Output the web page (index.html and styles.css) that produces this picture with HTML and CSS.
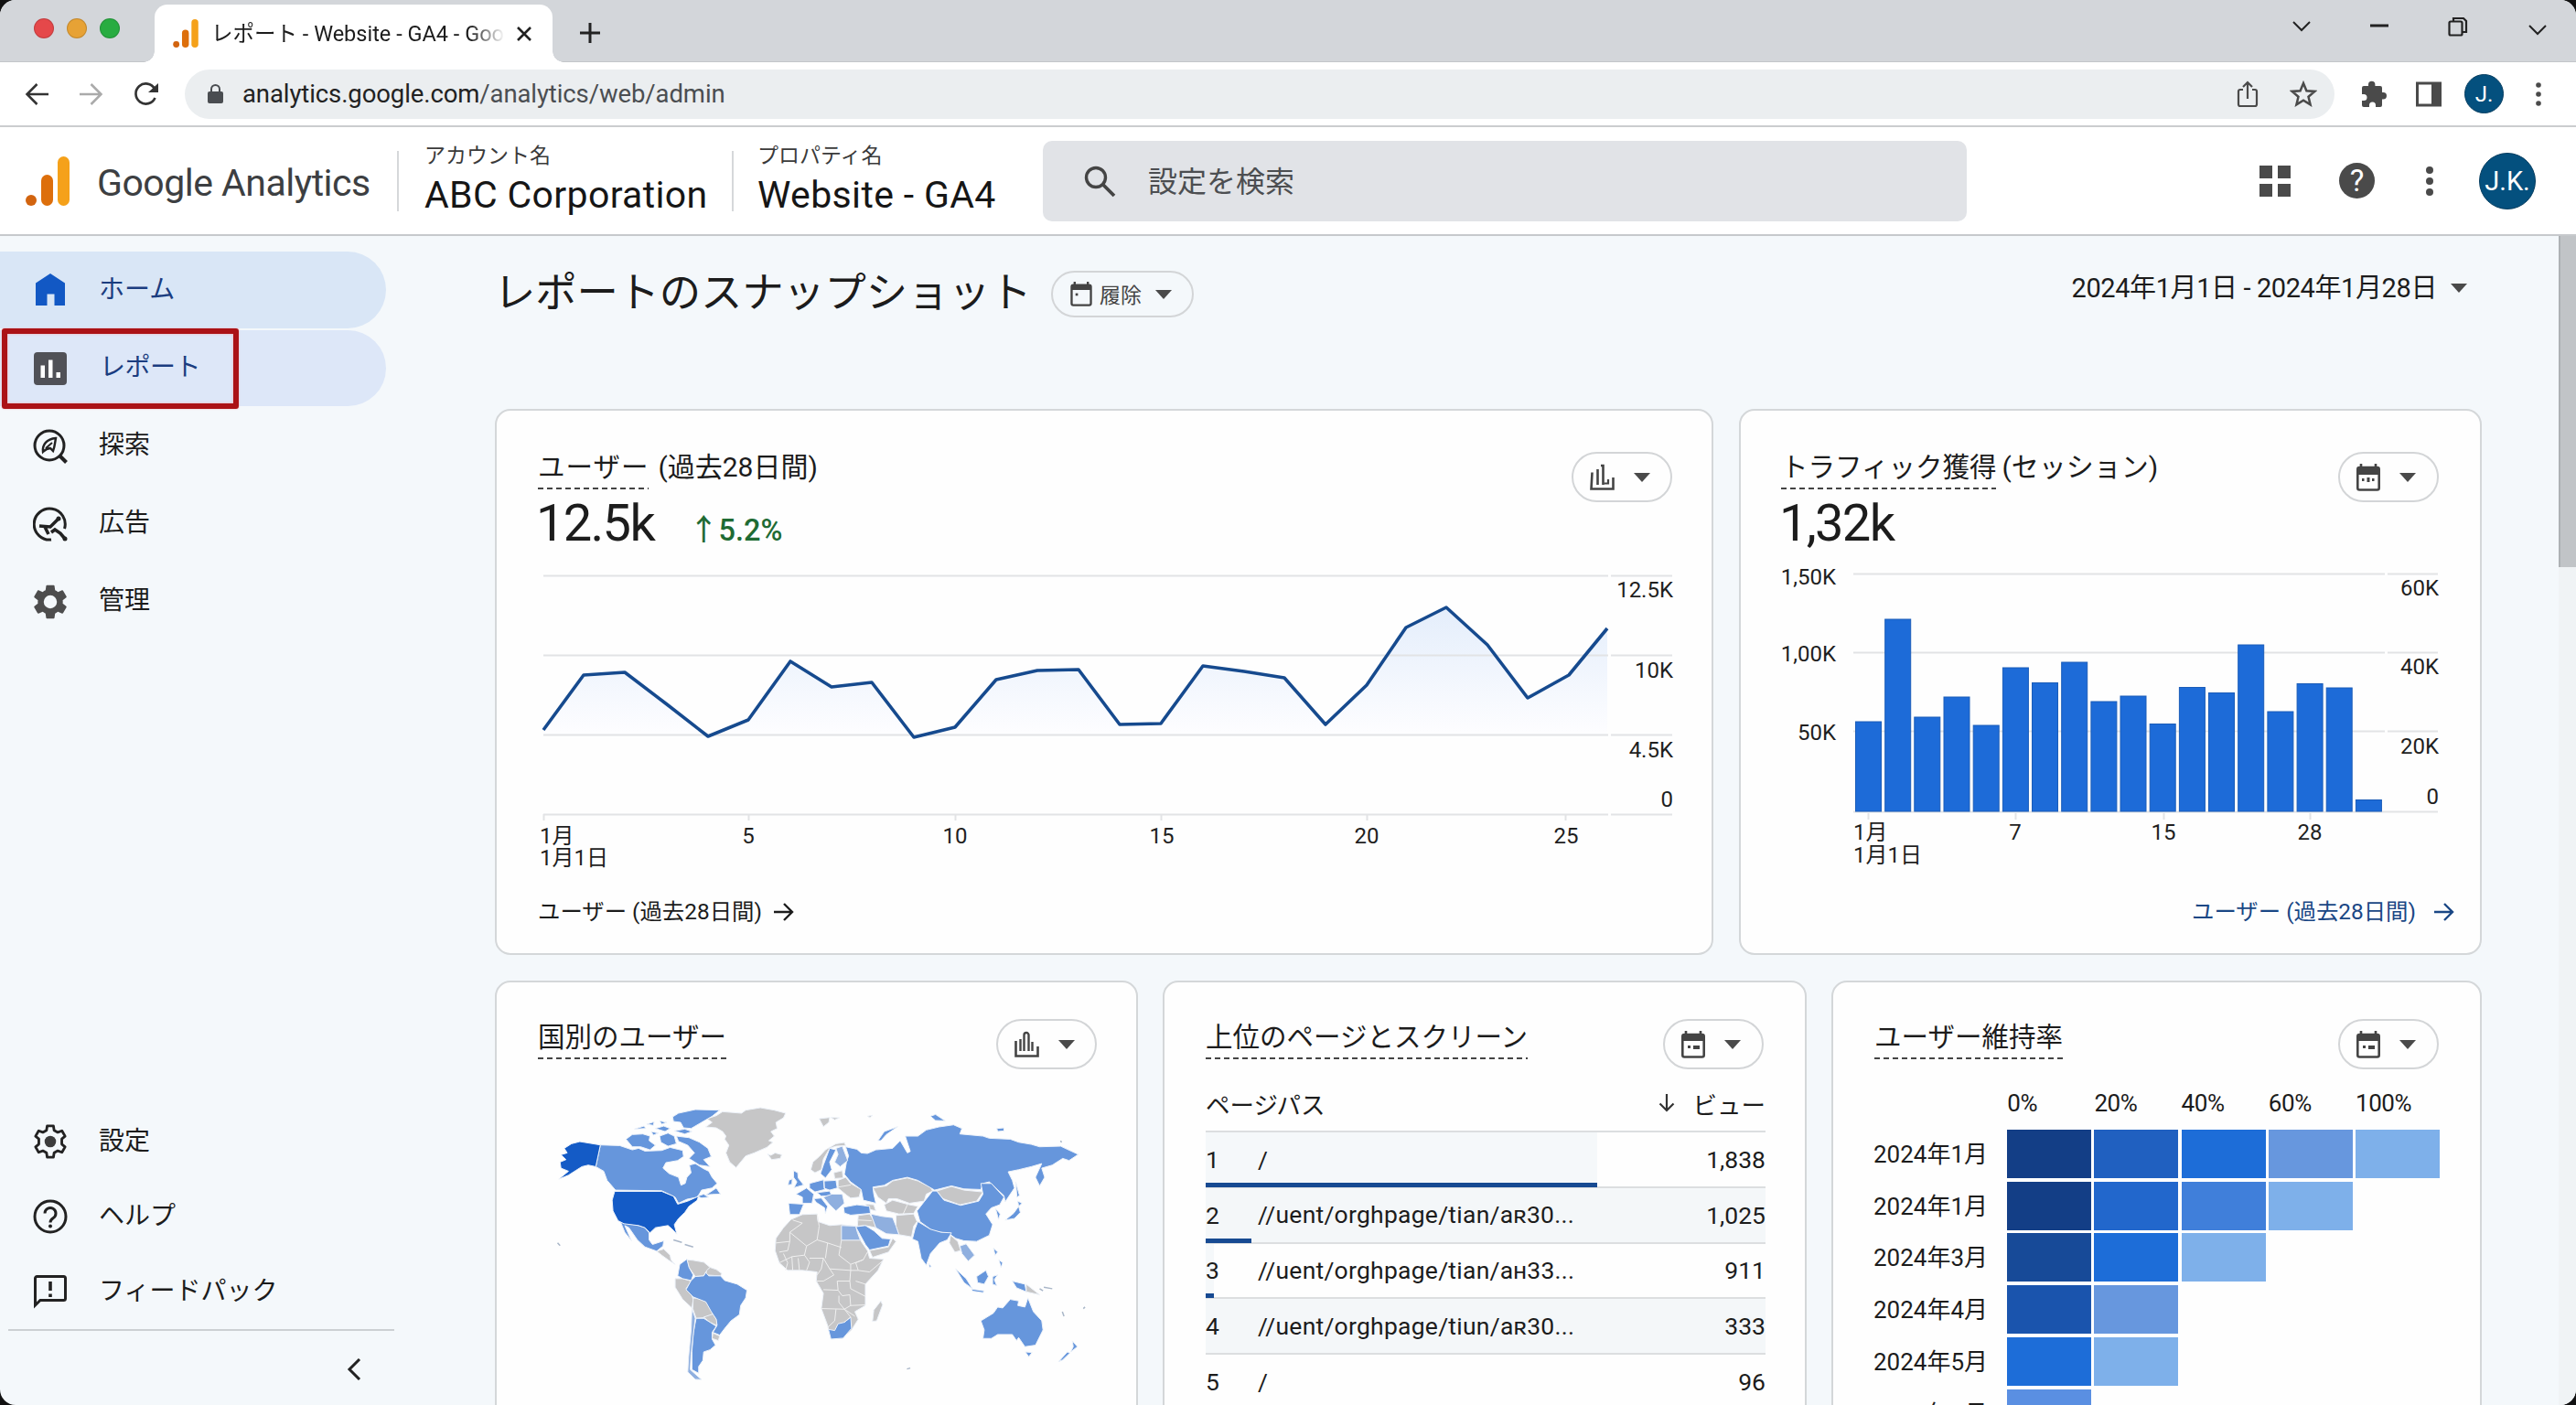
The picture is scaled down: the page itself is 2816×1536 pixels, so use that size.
FILE: index.html
```html
<!DOCTYPE html>
<html lang="ja">
<head>
    <meta charset="UTF-8">
    <meta name="viewport" content="width=device-width, initial-scale=1.0">
    <title>レポート - Website - GA4 - Google Analytics</title>
    <link rel="stylesheet" href="styles.css">
</head>
<body>
<svg class="defs" width="0" height="0">
    <symbol id="ic-ga" viewBox="0 0 48 54">
        <circle cx="6" cy="48" r="6" fill="#d2640f"/>
        <rect x="17" y="20" width="13" height="34" rx="6.5" fill="#dd6f0c"/>
        <rect x="35" y="0" width="13" height="54" rx="6.5" fill="#f5a11a"/>
    </symbol>
    <symbol id="ic-down" viewBox="0 0 18 10"><path d="M0 0h18l-9 10z" fill="#4a4a4a"/></symbol>
    <symbol id="ic-cal" viewBox="0 0 26 30">
        <path d="M5 0v6M21 0v6" stroke="#444" stroke-width="2.600"/>
        <rect x="1.300" y="4" width="23.400" height="24.500" rx="2" fill="none" stroke="#444" stroke-width="2.600"/>
        <path d="M1 4h24v7H1z" fill="#444"/>
        <path d="M7 16h3v3H7zM13 16h7v4h-7z" fill="#444"/>
    </symbol>
    <symbol id="ic-cal-empty" viewBox="0 0 26 30">
        <path d="M5 0v6M21 0v6" stroke="#444" stroke-width="2.600"/>
        <rect x="1.300" y="4" width="23.400" height="24.500" rx="2" fill="none" stroke="#444" stroke-width="2.600"/>
        <path d="M1 4h24v6H1z" fill="#444"/>
        <path d="M6 14h3v3H6z" fill="#444"/>
    </symbol>
    <symbol id="ic-cal-days" viewBox="0 0 26 30">
        <path d="M5 0v6M21 0v6" stroke="#444" stroke-width="2.600"/>
        <rect x="1.300" y="4" width="23.400" height="24.500" rx="2" fill="none" stroke="#444" stroke-width="2.600"/>
        <path d="M1 4h24v8H1z" fill="#444"/>
        <path d="M6 16h2.500v3H6zM11.500 15h3v5h-3zM17 16h2.500v3H17z" fill="#444"/>
    </symbol>
    <symbol id="ic-chart" viewBox="0 0 27 29">
        <path d="M2.500 9.500L1.500 27.500h24V15M8.500 6v17M12 2h2.500v21" fill="none" stroke="#444" stroke-width="2.600"/>
        <path d="M15.500 21.500h4.500v-4.500" fill="none" stroke="#444" stroke-width="2.200"/>
    </symbol>
    <symbol id="ic-chart-round" viewBox="0 0 27 29">
        <path d="M1.500 11v16.500h24V17" fill="none" stroke="#444" stroke-width="2.600"/>
        <path d="M6.500 9v13M10.500 22V4.500a2.500 2.500 0 0 1 5 0V22M19.500 12v10" fill="none" stroke="#444" stroke-width="2.400"/>
    </symbol>
    <symbol id="ic-arrow" viewBox="0 0 24 22"><path d="M1 11h20M12 2l9 9-9 9" fill="none" stroke="currentColor" stroke-width="2.400"/></symbol>
</svg>

<div class="window">
    <!-- タブバー -->
    <div class="tabstrip">
        <div class="lights"><i class="red"></i><i class="yellow"></i><i class="green"></i></div>
        <div class="tab">
            <svg class="favicon" width="28" height="31"><use href="#ic-ga"/></svg>
            <span class="tab-title">レポート - Website - GA4 - Goo</span>
            <svg class="tab-close" width="18" height="18" viewBox="0 0 18 18"><path d="M2 2l14 14M16 2L2 16" stroke="#222" stroke-width="2.600"/></svg>
        </div>
        <svg class="tab-new" width="24" height="24" viewBox="0 0 24 24"><path d="M12 1v22M1 12h22" stroke="#222" stroke-width="3"/></svg>
        <div class="win-controls">
            <svg width="20" height="14" viewBox="0 0 20 14"><path d="M1 2l9 9 9-9" fill="none" stroke="#222" stroke-width="2"/></svg>
            <svg width="20" height="14" viewBox="0 0 20 14"><path d="M0 6h20" stroke="#222" stroke-width="3"/></svg>
            <svg width="22" height="22" viewBox="0 0 22 22"><path d="M6 5V2h11l3 3v12h-4" fill="none" stroke="#222" stroke-width="2.200"/><rect x="1.500" y="5.500" width="14" height="15" rx="1.500" fill="none" stroke="#222" stroke-width="2.200"/></svg>
            <svg class="low" width="20" height="14" viewBox="0 0 20 14"><path d="M1 2l9 9 9-9" fill="none" stroke="#222" stroke-width="2"/></svg>
        </div>
    </div>

    <!-- アドレスバー -->
    <div class="toolbar">
        <svg class="nav-back" width="26" height="26" viewBox="0 0 26 26"><path d="M26 13H3M13.500 2L2.500 13l11 11" fill="none" stroke="#333" stroke-width="2.500"/></svg>
        <svg class="nav-fwd" width="26" height="26" viewBox="0 0 26 26"><path d="M0 13h23M12.500 2l11 11-11 11" fill="none" stroke="#aaa" stroke-width="2.500"/></svg>
        <svg class="nav-reload" width="28" height="28" viewBox="0 0 28 28"><path d="M23.500 18A11 11 0 1 1 23 8" fill="none" stroke="#333" stroke-width="2.700"/><path d="M27 2v10H16z" fill="#333"/></svg>
        <div class="omnibox">
            <svg class="lock" width="17" height="22" viewBox="0 0 17 22"><rect y="8" width="17" height="13" rx="2" fill="#4a4d51"/><path d="M4 9V5.500a4.500 4.500 0 0 1 9 0V9" fill="none" stroke="#4a4d51" stroke-width="2"/></svg>
            <span class="url">analytics.google.com<span class="path">/analytics/web/admin</span></span>
            <svg class="share" width="24" height="30" viewBox="0 0 24 30"><path d="M7 10H4a2 2 0 0 0-2 2v14a2 2 0 0 0 2 2h16a2 2 0 0 0 2-2V12a2 2 0 0 0-2-2h-3M12 20V3M7 7l5-5 5 5" fill="none" stroke="#4a4a4a" stroke-width="2.200"/></svg>
            <svg class="star" width="30" height="29" viewBox="0 0 30 29"><path d="M15 3l3.400 8.200 8.900.7-6.800 5.800 2.100 8.700-7.600-4.700-7.600 4.700 2.100-8.700-6.800-5.800 8.900-.7z" fill="none" stroke="#4a4a4a" stroke-width="2.500"/></svg>
        </div>
        <svg class="puzzle" width="29" height="29" viewBox="0 0 29 29"><path d="M2 8a2 2 0 0 1 2-2h5V4.500a3.700 3.700 0 0 1 7.400 0V6H22a2 2 0 0 1 2 2v5h1.300a3.700 3.700 0 0 1 0 7.400H24V27a2 2 0 0 1-2 2h-5v-2a3.500 3.500 0 0 0-7 0v2H4a2 2 0 0 1-2-2v-5h2a3.500 3.500 0 0 0 0-7H2z" fill="#4a4a4a"/></svg>
        <svg class="panel" width="28" height="28" viewBox="0 0 28 28"><rect x="1.500" y="2" width="25" height="24" fill="none" stroke="#4a4a4a" stroke-width="3"/><path d="M17 2h10v24H17z" fill="#4a4a4a"/></svg>
        <div class="avatar small">J.</div>
        <svg class="kebab-sm" width="6" height="26" viewBox="0 0 6 26"><g fill="#4a4a4a"><circle cx="3" cy="3" r="2.800"/><circle cx="3" cy="13" r="2.800"/><circle cx="3" cy="23" r="2.800"/></g></svg>
    </div>

    <!-- ヘッダー -->
    <header class="header">
        <svg class="logo" width="48" height="54"><use href="#ic-ga"/></svg>
        <div class="brand"><b>Google</b> Analytics</div>
        <div class="account first">
            <small>アカウント名</small>
            <span>ABC Corporation</span>
        </div>
        <div class="account second">
            <small>プロパティ名</small>
            <span>Website - GA4</span>
        </div>
        <div class="search">
            <svg width="36" height="36" viewBox="0 0 36 36"><circle cx="14" cy="14" r="10.500" fill="none" stroke="#444" stroke-width="3.400"/><path d="M21.500 21.500L34 34" stroke="#444" stroke-width="3.800"/></svg>
            <span>設定を検索</span>
        </div>
        <div class="header-icons">
            <svg width="34" height="34" viewBox="0 0 34 34"><path d="M0 0h14v14H0zM20 0h14v14H20zM0 20h14v14H0zM20 20h14v14H20z" fill="#4a4a4a"/></svg>
            <div class="help">?</div>
            <svg class="kebab" width="8" height="34" viewBox="0 0 8 34"><g fill="#4a4a4a"><circle cx="4" cy="5" r="4"/><circle cx="4" cy="17" r="4"/><circle cx="4" cy="29" r="4"/></g></svg>
            <div class="avatar">J.K.</div>
        </div>
    </header>

    <div class="body">
        <!-- サイドバー -->
        <nav class="sidebar">
            <a class="item active home">
                <svg width="36" height="36" viewBox="0 0 36 36"><path d="M18 0l16 10.500V35H22.500V22.500h-8V35H2V10.500z" fill="#1258c4"/></svg>
                <span>ホーム</span>
            </a>
            <a class="item active report">
                <svg width="36" height="36" viewBox="0 0 36 36"><rect width="36" height="36" rx="4" fill="#505157"/><path d="M7.500 14.500h4.500V28H7.500zM16 8.500h4.500V28H16zM24.500 22h4.500v6h-4.500z" fill="#fff"/></svg>
                <span>レポート</span>
            </a>
            <a class="item">
                <svg width="38" height="38" viewBox="0 0 38 38"><g fill="none" stroke="#222" stroke-width="3"><circle cx="18" cy="18" r="16"/><path d="M29 29l7.500 7.500" stroke-width="4"/></g><path d="M11 25c-1-8 4-14 14-15-1 5-1 9-3 14l-3-3c-3 0-5 1-8 4z" fill="none" stroke="#222" stroke-width="2.400"/><path d="M14 21l7-6" stroke="#222" stroke-width="2"/></svg>
                <span>探索</span>
            </a>
            <a class="item">
                <svg width="38" height="38" viewBox="0 0 38 38"><g fill="none" stroke="#222" stroke-width="3"><path d="M20 36A17 17 0 1 1 34.500 24"/><path d="M29 12l-10 10-12-1M13 22l4 8M20 28l4-3 6 4 5 6" stroke-width="3.600"/></g><circle cx="28" cy="13" r="2.500" fill="#222"/><circle cx="35" cy="35" r="2.500" fill="#222"/></svg>
                <span>広告</span>
            </a>
            <a class="item">
                <svg width="38" height="38" viewBox="2 2 20 20"><path fill="#4d4d4d" d="M19.140 12.940c.04-.3.060-.61.060-.94 0-.32-.02-.64-.07-.94l2.030-1.580a.49.49 0 0 0 .12-.61l-1.920-3.320a.488.488 0 0 0-.59-.22l-2.390.96c-.5-.38-1.030-.7-1.620-.94l-.36-2.540a.484.484 0 0 0-.48-.41h-3.840c-.24 0-.43.17-.47.41l-.36 2.540c-.59.24-1.130.57-1.620.94l-2.390-.96c-.22-.08-.47 0-.59.22L2.740 8.870c-.12.21-.08.47.12.61l2.030 1.580c-.05.3-.09.63-.09.94s.02.64.07.94l-2.030 1.580a.49.49 0 0 0-.12.61l1.920 3.320c.12.22.37.29.59.22l2.390-.96c.5.38 1.030.7 1.620.94l.36 2.540c.05.24.24.41.48.41h3.840c.24 0 .44-.17.47-.41l.36-2.540c.59-.24 1.130-.56 1.620-.94l2.390.96c.22.080.47 0 .59-.22l1.920-3.320c.12-.22.070-.47-.12-.61zM12 15.800a3.800 3.800 0 1 1 0-7.600 3.800 3.800 0 0 1 0 7.600z"/></svg>
                <span>管理</span>
            </a>
            <div class="spacer"></div>
            <a class="item low">
                <svg width="38" height="38" viewBox="2 2 20 20"><path fill="none" stroke="#222" stroke-width="1.500" stroke-linejoin="round" d="M9.800 5.500L10.200 3h3.600l.4 2.500 2.100 1.200 2.400-.9 1.800 3.100-1.900 1.600v3l1.900 1.600-1.800 3.100-2.400-.9-2.100 1.200-.4 2.500h-3.600l-.4-2.500-2.100-1.200-2.400.9-1.800-3.100 1.900-1.600v-3L3.500 8.900l1.800-3.100 2.400.9z"/><circle cx="12" cy="12" r="3.300" fill="#3c3c3c"/></svg>
                <span>設定</span>
            </a>
            <a class="item low">
                <svg width="38" height="38" viewBox="0 0 38 38"><circle cx="19" cy="19" r="17" fill="none" stroke="#222" stroke-width="3"/><path d="M13 15.500a6 6 0 1 1 9 5.200c-2.200 1.500-3 2.300-3 4.800" fill="none" stroke="#222" stroke-width="3"/><circle cx="19" cy="29.500" r="2" fill="#222"/></svg>
                <span>ヘルプ</span>
            </a>
            <a class="item low">
                <svg width="38" height="38" viewBox="0 0 38 38"><path d="M2.500 34V4.500a2 2 0 0 1 2-2h29a2 2 0 0 1 2 2v22a2 2 0 0 1-2 2H8z" fill="none" stroke="#222" stroke-width="3"/><path d="M19 8v10M19 21.500v3.500" stroke="#222" stroke-width="3.600"/></svg>
                <span>フィードパック</span>
            </a>
            <div class="collapse">
                <svg width="16" height="24" viewBox="0 0 16 24"><path d="M14 1L3 12l11 11" fill="none" stroke="#222" stroke-width="3"/></svg>
            </div>
        </nav>

        <main class="main">
            <div class="page-head">
                <h1>レポートのスナップショット</h1>
                <div class="chip wide">
                    <svg width="24" height="27"><use href="#ic-cal-empty"/></svg>
                    <span>履除</span>
                    <svg width="18" height="10"><use href="#ic-down"/></svg>
                </div>
                <div class="date">2024年1月1日 - 2024年1月28日<svg width="18" height="10"><use href="#ic-down"/></svg></div>
            </div>

            <div class="row top">
                <section class="card users">
                    <div class="card-head">
                        <h2><span class="dash">ユーザー</span><span class="rest">(過去28日間)</span></h2>
                        <div class="chip"><svg width="27" height="29"><use href="#ic-chart"/></svg><svg width="18" height="10"><use href="#ic-down"/></svg></div>
                    </div>
                    <div class="total">12.5k<span class="up">↑5.2%</span></div>
                    <svg class="plot" width="1245" height="330" viewBox="586 620 1245 330">
                        <defs>
                            <linearGradient id="area" gradientUnits="userSpaceOnUse" x1="0" y1="660" x2="0" y2="800">
                                <stop offset="0" stop-color="#e3edfb"/>
                                <stop offset="1" stop-color="#fdfdff"/>
                            </linearGradient>
                        </defs>
                        <path fill="url(#area)" d="M594 798L638 738L683 735L729 770L774 803L818 787L864 723L909 751L953 746L999 803L1044 795L1089 743L1134 733L1179 732L1224 792L1269 791L1315 728L1360 734L1404 741L1449 792L1494 749L1537 686L1581 664L1626 705L1670 763L1715 738L1757 687V803H594z"/>
                        <path class="grid" d="M594 629.500H1758M1761 629.500H1828M594 716.500H1758M1761 716.500H1828M594 803.500H1758M1761 803.500H1828M594 890.500H1758M1761 890.500H1828M594.500 890v7M818.500 890v7M1044.500 890v7M1269.500 890v7M1494.500 890v7M1711.500 890v7"/>
                        <path class="line" d="M594 798L638 738L683 735L729 770L774 805L818 787L864 723L909 751L953 746L999 806L1044 795L1089 743L1134 733L1179 732L1224 792L1269 791L1315 728L1360 734L1404 741L1449 792L1494 749L1537 686L1581 664L1626 705L1670 763L1715 738L1757 687"/>
                        <g class="end">
                            <text x="1829" y="653">12.5K</text><text x="1829" y="741">10K</text><text x="1829" y="828">4.5K</text><text x="1829" y="882">0</text>
                        </g>
                        <text x="590" y="922">1月</text><text x="590" y="946">1月1日</text>
                        <g class="mid">
                            <text x="818" y="922">5</text><text x="1044" y="922">10</text><text x="1270" y="922">15</text><text x="1494" y="922">20</text><text x="1712" y="922">25</text>
                        </g>
                    </svg>
                    <a class="more">ユーザー (過去28日間)<svg width="24" height="22"><use href="#ic-arrow"/></svg></a>
                </section>

                <section class="card traffic">
                    <div class="card-head">
                        <h2><span class="dash">トラフィック獲得</span><span class="rest">(セッション)</span></h2>
                        <div class="chip"><svg width="26" height="30"><use href="#ic-cal-days"/></svg><svg width="18" height="10"><use href="#ic-down"/></svg></div>
                    </div>
                    <div class="total">1,32k</div>
                    <svg class="plot" width="721" height="330" viewBox="1946 620 721 330">
                        <path class="grid" d="M2026 627.500H2607M2610 627.500H2665M2026 713.500H2607M2610 713.500H2665M2026 799.500H2607M2610 799.500H2665M2026 887.500H2665M2042.500 889v7M2203.500 889v7M2365.500 889v7M2525.500 889v7"/>
                        <g class="bars">
                            <rect x="2028.500" y="789" width="28" height="98"/>
                            <rect x="2060.700" y="677" width="28" height="210"/>
                            <rect x="2092.800" y="784" width="28" height="103"/>
                            <rect x="2125" y="762" width="28" height="125"/>
                            <rect x="2157.200" y="793" width="28" height="94"/>
                            <rect x="2189.400" y="730" width="28" height="157"/>
                            <rect x="2221.500" y="746.500" width="28" height="140.500"/>
                            <rect x="2253.700" y="724" width="28" height="163"/>
                            <rect x="2285.900" y="767" width="28" height="120"/>
                            <rect x="2318" y="761" width="28" height="126"/>
                            <rect x="2350.200" y="791.500" width="28" height="95.500"/>
                            <rect x="2382.400" y="751.500" width="28" height="135.500"/>
                            <rect x="2414.500" y="757.500" width="28" height="129.500"/>
                            <rect x="2446.700" y="705" width="28" height="182"/>
                            <rect x="2478.900" y="778" width="28" height="109"/>
                            <rect x="2511.100" y="747.500" width="28" height="139.500"/>
                            <rect x="2543.200" y="752" width="28" height="135"/>
                            <rect x="2575.400" y="874.500" width="28" height="12.500"/>
                        </g>
                        <g class="end">
                            <text x="2007" y="639">1,50K</text><text x="2007" y="723">1,00K</text><text x="2007" y="809">50K</text>
                            <text x="2666" y="651">60K</text><text x="2666" y="737">40K</text><text x="2666" y="824">20K</text><text x="2666" y="879">0</text>
                        </g>
                        <text x="2026" y="918">1月</text><text x="2026" y="943">1月1日</text>
                        <g class="mid"><text x="2203" y="918">7</text><text x="2365" y="918">15</text><text x="2525" y="918">28</text></g>
                    </svg>
                    <a class="more blue">ユーザー (過去28日間)<svg width="24" height="22"><use href="#ic-arrow"/></svg></a>
                </section>
            </div>

            <div class="row bottom">
                <section class="card">
                    <div class="card-head">
                        <h2><span class="dash">国別のユーザー</span></h2>
                        <div class="chip"><svg width="27" height="29"><use href="#ic-chart-round"/></svg><svg width="18" height="10"><use href="#ic-down"/></svg></div>
                    </div>
                    <svg class="map" width="583" height="307" viewBox="140 440 1270 920" preserveAspectRatio="none">
                        <!-- データなしの国 -->
                        <g class="none">
                            <path d="M505 515L520 500L508 488L530 478L545 465L590 470L600 460L635 452L668 460L695 470L690 485L672 500L675 520L660 530L668 545L655 560L665 565L650 582L620 600L600 610L585 635L577 648L562 630L553 600L560 575L550 555L553 545L545 530L530 518Z"/>
                            <path d="M652 604L660 608L670 600L686 606L682 618L662 622Z"/>
                            <path d="M775 488L800 484L798 500L785 514ZM803 484L823 485L812 492ZM890 480L902 477L896 485Z"/>
                            <path d="M388 922L405 915L420 935L422 950L432 965L415 950L400 935Z"/>
                            <path d="M460 950L475 952L500 958L515 975L505 990L500 1003L480 1005L465 975Z"/>
                            <path d="M515 975L530 982L543 995L540 1003L505 1000L507 985Z"/>
                            <path d="M432 1012L450 1012L470 1020L458 1045L472 1068L475 1080L472 1108L450 1080L432 1040Z"/>
                            <path d="M475 1075L500 1080L515 1105L522 1130L500 1140L482 1142L474 1110Z"/>
                            <path d="M500 1138L522 1128L532 1150L530 1165L515 1155ZM522 1190L538 1200L535 1215L520 1208Z"/>
                            <path d="M708 818L735 802L770 800L772 825L800 838L828 835L862 840L875 890L890 920L895 945L928 948L915 985L885 1030L885 1070L885 1100L860 1120L868 1145L852 1180L830 1208L803 1210L795 1165L780 1110L785 1060L768 1020L770 990L735 985L700 985L680 960L670 920L672 880L690 845Z"/>
                            <path d="M905 1115L922 1085L926 1098L912 1150L902 1152Z"/>
                            <path d="M895 920L940 908L950 880L958 890L940 925L902 942Z"/>
                            <path d="M755 655L760 630L775 612L790 590L815 570L835 566L838 576L815 578L800 585L785 620L780 655L765 665Z"/>
                            <path d="M810 665L830 658L832 682L812 684ZM820 690L838 680L850 700L875 720L870 745L850 748L840 738L820 715Z"/>
                            <path d="M868 805L895 800L905 820L910 845L885 838L866 840ZM885 768L905 770L910 790L895 785Z"/>
                            <path d="M958 805L1000 800L1008 825L1000 840L995 875L965 868L958 840Z"/>
                            <path d="M903 715L935 708L950 692L985 682L1010 692L1040 712L1045 725L1030 735L1025 758L990 765L960 750L940 750L935 765L915 745Z"/>
                            <path d="M930 770L950 755L990 770L1010 775L1000 798L965 800L935 790Z"/>
                            <path d="M1055 725L1090 710L1120 722L1165 728L1150 758L1110 770L1070 750Z"/>
                            <path d="M1088 870L1105 890L1112 920L1098 925L1085 895ZM1268 1030L1300 1065L1285 1060L1268 1055Z"/>
                        </g>
                        <!-- データあり -->
                        <g class="some">
                            <path d="M254 574L300 576L330 590L345 585L360 594L400 592L420 582L450 592L452 612L438 625L410 632L403 650L418 668L440 680L446 706L456 700L460 680L470 665L466 640L480 635L500 652L512 660L520 680L532 700L520 715L495 722L485 745L460 752L440 765L432 745L400 724L290 722L270 690L262 660L243 645Z"/>
                            <path d="M440 470L480 458L538 460L520 480L495 500L470 520L452 518L445 500L428 497L426 482Z"/>
                            <path d="M315 555L330 540L355 538L372 545L370 560L385 575L372 590L350 580L330 580Z"/>
                            <path d="M435 545L465 550L490 565L510 585L518 612L500 622L515 645L490 640L465 618L478 600L462 575L440 562Z"/>
                            <path d="M395 545L415 535L430 545L435 570L415 578L398 565ZM385 520L405 512L420 520L408 530ZM430 528L455 522L472 530L455 538ZM335 522L358 512L362 520ZM365 506L382 498L380 510ZM395 495L412 500L400 506ZM375 530L392 535L380 542Z"/>
                            <path d="M505 738L530 715L540 735L520 736ZM485 742L500 735L512 745L495 748Z"/>
                            <path d="M302 826L345 838L360 845L370 862L370 885L378 900L405 888L403 905L388 922L360 908L342 885L322 845L312 838L328 888L312 860Z"/>
                            <path d="M443 965L460 948L465 975L475 1000L470 1018L450 1012L438 1003Z"/>
                            <path d="M470 1018L480 1005L500 1003L505 992L512 1003L540 1003L550 1018L580 1030L603 1050L600 1075L588 1100L585 1130L565 1150L550 1175L538 1197L522 1188L532 1165L530 1145L518 1120L505 1088L475 1072L458 1048Z"/>
                            <path d="M482 1142L500 1142L515 1155L530 1168L520 1188L520 1210L528 1230L515 1245L500 1252L498 1280L488 1300L488 1322L472 1310L472 1250L475 1190Z"/>
                            <path d="M797 1178L812 1182L820 1160L835 1155L850 1138L852 1175L832 1207L803 1210Z"/>
                            <path d="M862 842L885 838L905 855L925 880L945 882L940 905L895 918L885 900Z"/>
                            <path d="M785 640L800 585L815 590L800 630L805 655L790 682L778 668Z"/>
                            <path d="M714 658L724 665L725 682L738 705L715 714L722 695L714 680ZM703 690L711 685L710 703L701 705Z"/>
                            <path d="M702 765L738 768L728 802L705 802ZM720 735L745 715L762 735L758 765L735 765L735 745Z"/>
                            <path d="M752 700L785 688L788 720L765 728L752 715ZM787 692L815 690L818 715L800 722L787 716Z"/>
                            <path d="M762 750L780 748L795 775L790 798L788 780L768 762ZM770 730L800 725L805 740L780 742Z"/>
                            <path d="M833 778L865 770L895 775L897 798L850 804L835 797Z"/>
                            <path d="M838 580L865 588L875 600L890 602L910 590L950 585L968 560L985 600L992 595L980 545L1010 545L1030 525L1060 515L1095 508L1115 520L1110 538L1165 545L1180 552L1230 555L1250 565L1280 572L1300 580L1350 578L1392 605L1370 625L1355 618L1330 640L1305 650L1312 680L1300 708L1290 680L1305 635L1280 645L1250 655L1225 662L1235 690L1240 715L1218 760L1215 740L1180 695L1165 700L1160 720L1120 718L1090 708L1050 722L1010 690L985 680L950 690L930 706L903 712L905 735L910 765L880 755L875 720L850 695L835 670L840 630L845 610Z"/>
                            <path d="M1045 725L1055 725L1072 755L1112 772L1155 758L1165 735L1160 700L1185 700L1215 745L1205 770L1185 780L1172 800L1188 835L1180 870L1150 890L1120 888L1100 880L1085 865L1045 855L1015 825L1008 790L1025 760Z"/>
                            <path d="M1003 850L1010 825L1040 850L1065 860L1090 862L1080 885L1062 895L1040 930L1030 968L1018 945L1010 890L997 882Z"/>
                            <path d="M915 560L930 530L962 514L935 540L922 560ZM1040 480L1052 474L1075 495L1052 494ZM1198 520L1215 518L1215 528L1200 530Z"/>
                            <path d="M1248 758L1258 765L1250 775ZM1250 775L1254 795L1240 815L1218 820L1238 798ZM1243 695L1252 740L1246 745ZM1195 782L1206 800L1202 818Z"/>
                            <path d="M1100 980L1125 1012L1140 1045L1120 1025ZM1138 1046L1168 1052L1165 1058L1140 1053ZM1150 1005L1172 985L1178 1005L1168 1030L1152 1025ZM1188 1005L1200 1000L1192 1015L1198 1035L1188 1030ZM1235 1020L1265 1030L1268 1055L1245 1042Z"/>
                            <path d="M1190 912L1200 925L1194 935ZM1203 950L1212 960L1208 975ZM1036 962L1042 972L1038 976Z"/>
                            <path d="M1160 1150L1190 1125L1200 1105L1212 1108L1230 1080L1250 1085L1248 1100L1265 1105L1272 1075L1285 1120L1305 1150L1308 1180L1290 1230L1265 1235L1250 1205L1245 1215L1235 1195L1200 1195L1185 1208L1165 1208L1168 1180Z"/>
                            <path d="M1266 1252L1282 1254L1274 1268ZM1378 1216L1390 1235L1374 1252L1380 1235ZM1345 1284L1366 1252L1372 1256L1355 1278Z"/>
                        </g>
                        <g class="few">
                            <path d="M815 585L830 578L843 625L825 645L812 630L820 605Z"/>
                            <path d="M828 838L862 840L866 860L873 886L828 886Z"/>
                            <path d="M898 800L925 808L950 812L958 840L965 868L935 865L910 845Z"/>
                            <path d="M785 745L805 735L830 735L835 765L815 790L800 770Z"/>
                            <path d="M1110 905L1125 898L1145 935L1130 955L1115 930Z"/>
                            <path d="M472 1110L480 1142L475 1200L470 1260L468 1310L495 1343L480 1342L462 1318L464 1270L470 1180Z"/>
                        </g>
                        <g class="most">
                            <path d="M168 585L185 570L205 563L254 574L243 645L225 640L210 645L195 658L178 673L155 686L178 660L160 650L158 630L172 622L160 606L175 600Z"/>
                            <path d="M288 726L400 726L428 742L438 768L462 758L488 742L484 756L465 775L455 795L440 815L430 835L436 866L425 850L415 838L385 845L372 862L360 845L345 838L310 832L296 822L284 790L282 755Z"/>
                        </g>
                        <!-- アフリカの国境 -->
                        <path class="borders" d="M712 820L735 830L705 860L705 890L672 895M705 860L745 905L770 885M770 800L775 840L770 885L795 895L828 910M795 895L790 945M828 886L822 935L850 965L880 950L890 925M745 905L740 935L710 940L680 960M740 935L752 958L745 985M752 945L785 945L780 980L770 1000M785 945L800 980L850 985M800 980L810 1000L785 1020L768 1020M850 965V985L848 1020L850 1045L885 1070M785 1048L820 1050L830 1068L848 1065L850 1100M780 1110L835 1112L850 1100L885 1098M835 1112L860 1135M815 1112L812 1150L795 1172M820 1050L818 1020L848 1020M690 930L700 960L695 985M710 940L712 985M725 945L728 985M880 950L862 960L868 985L895 990L925 955M850 985L868 985M862 1020L885 1030M822 1068V1090L835 1112M835 1155L850 1138L835 1112M705 890L700 920L680 925M868 820L900 822M985 770L975 800M820 712L850 705"/>
                        <path class="ticks" d="M428 885L448 893M455 900L475 908M152 895L158 904M1350 560L1352 566M1310 1040L1330 1045M1404 1110L1408 1105M1354 1120L1358 1135M1300 1045L1308 1052M984 1308L992 1305"/>
                    </svg>
                </section>

                <section class="card pages">
                    <div class="card-head">
                        <h2><span class="dash">上位のページとスクリーン</span></h2>
                        <div class="chip"><svg width="26" height="30"><use href="#ic-cal"/></svg><svg width="18" height="10"><use href="#ic-down"/></svg></div>
                    </div>
                    <div class="thead"><span>ページパス</span><span class="views"><svg width="18" height="20" viewBox="0 0 18 20"><path d="M9 0v18M1.500 10.500L9 18l7.500-7.500" fill="none" stroke="#333" stroke-width="2.200"/></svg>ビュー</span></div>
                    <div class="tr"><div class="fill" style="width: 428px"></div><span class="n">1</span><span class="p">/</span><span class="v">1,838</span></div>
                    <div class="tr shade"><div class="fill" style="width: 50px"></div><span class="n">2</span><span class="p">//uent/orghpage/tian/aʀ30...</span><span class="v">1,025</span></div>
                    <div class="tr"><div class="fill" style="width: 9px"></div><span class="n">3</span><span class="p">//uent/orghpage/tian/aʜ33...</span><span class="v">911</span></div>
                    <div class="tr shade"><span class="n">4</span><span class="p">//uent/orghpage/tiun/aʀ30...</span><span class="v">333</span></div>
                    <div class="tr"><span class="n">5</span><span class="p">/</span><span class="v">96</span></div>
                </section>

                <section class="card retention">
                    <div class="card-head">
                        <h2><span class="dash">ユーザー維持率</span></h2>
                        <div class="chip"><svg width="26" height="30"><use href="#ic-cal"/></svg><svg width="18" height="10"><use href="#ic-down"/></svg></div>
                    </div>
                    <div class="cohort">
                        <span></span><b>0%</b><b>20%</b><b>40%</b><b>60%</b><b>100%</b>
                        <span>2024年1月</span><i class="c1"></i><i class="c4"></i><i class="c5"></i><i class="c7"></i><i class="c8"></i>
                        <span>2024年1月</span><i class="c1"></i><i class="c45"></i><i class="c6"></i><i class="c8"></i><i></i>
                        <span>2024年3月</span><i class="c2"></i><i class="c5"></i><i class="c8"></i><i></i><i></i>
                        <span>2024年4月</span><i class="c3"></i><i class="c7"></i><i></i><i></i><i></i>
                        <span>2024年5月</span><i class="c5"></i><i class="c8"></i><i></i><i></i><i></i>
                        <span>2024年6月</span><i class="c65"></i><i></i><i></i><i></i><i></i>
                    </div>
                </section>
            </div>
        </main>
        <div class="scrollbar"><div class="thumb"></div></div>
    </div>
</div>
</body>
</html>
```
FILE: styles.css
```css
*,
*::before,
*::after {
    box-sizing: border-box;
}

html {
    background: #111;
}

body {
    margin: 0;
    font-family: Roboto, 'Noto Sans CJK JP', sans-serif;
    color: #1c1c1c;
}

.defs {
    display: block;
}

svg {
    flex: none;
    display: block;
}

.window {
    width: 2816px;
    height: 1536px;
    overflow: hidden;
    border-radius: 17px;
    background: #f4f8fb;
    display: flex;
    flex-direction: column;
}

/* タブバー */
.tabstrip {
    height: 68px;
    flex: none;
    background: #d3d6da;
    border-bottom: 1px solid #c3c6c9;
    display: flex;
    align-items: flex-start;
}

.lights {
    display: flex;
    gap: 14px;
    padding: 20px 0 0 37px;
    width: 169px;
}

.lights i {
    width: 22px;
    height: 22px;
    border-radius: 50%;
    border: 1px solid rgba(0, 0, 0, 0.15);
}

.red { background: #e5484a; }
.yellow { background: #e7a235; }
.green { background: #28ac41; }

.tab {
    position: relative;
    width: 435px;
    height: 63px;
    margin-top: 5px;
    background: #fff;
    border-radius: 14px 14px 0 0;
    display: flex;
    align-items: center;
    padding: 0 20px;
}

.tab::before,
.tab::after {
    content: "";
    position: absolute;
    bottom: 0;
    width: 12px;
    height: 12px;
}

.tab::before {
    left: -12px;
    background: radial-gradient(circle at 0 0, transparent 11.5px, #fff 12px);
}

.tab::after {
    right: -12px;
    background: radial-gradient(circle at 100% 0, transparent 11.5px, #fff 12px);
}

.tab-title {
    width: 321px;
    margin: 0 12px 0 14px;
    overflow: hidden;
    white-space: nowrap;
    font-size: 23.5px;
    line-height: 34px;
    -webkit-mask-image: linear-gradient(90deg, #000 88%, transparent);
    mask-image: linear-gradient(90deg, #000 88%, transparent);
}

.tab-new {
    margin: 24px 0 0 29px;
}

.win-controls {
    margin-left: auto;
    width: 310px;
    padding-top: 18px;
    display: flex;
    gap: 65px;
}

.win-controls svg:first-child,
.win-controls svg:nth-child(2) {
    margin-top: 4px;
}

.win-controls .low {
    margin-top: 8px;
    margin-left: 1px;
}

/* アドレスバー */
.toolbar {
    height: 71px;
    flex: none;
    background: #fff;
    border-bottom: 2px solid #cbcdcf;
    display: flex;
    align-items: center;
    padding-left: 27px;
}

.nav-fwd { margin-left: 34px; }
.nav-reload { margin-left: 33px; }

.omnibox {
    width: 2350px;
    height: 54px;
    margin-left: 28px;
    border-radius: 27px;
    background: #ebeef0;
    display: flex;
    align-items: center;
    padding-left: 25px;
}

.url {
    margin-left: 21px;
    font-size: 27.5px;
    letter-spacing: -0.1px;
    color: #222;
}

.url .path {
    color: #4b4e52;
}

.share {
    margin-left: auto;
}

.star {
    margin: 0 19px 0 34px;
}

.puzzle { margin-left: 28px; }
.panel { margin-left: 32px; }

.avatar {
    width: 62px;
    height: 62px;
    border-radius: 50%;
    background: #04507e;
    border: 1px solid #063d60;
    color: #fff;
    font-size: 29px;
    display: flex;
    align-items: center;
    justify-content: center;
}

.avatar.small {
    width: 43px;
    height: 43px;
    margin-left: 25px;
    font-size: 24px;
}

.kebab-sm { margin-left: 35px; }

/* ヘッダー */
.header {
    height: 119px;
    flex: none;
    background: #fff;
    border-bottom: 2px solid #c6c9cc;
    display: flex;
    align-items: center;
    padding-left: 28px;
}

.brand {
    width: 328px;
    margin: 4px 0 0 30px;
    font-size: 41px;
    letter-spacing: -0.5px;
    color: #3d3f42;
    white-space: nowrap;
}

.brand b {
    font-weight: 400;
}

.account {
    height: 66px;
    border-left: 2px solid #d6d8da;
    padding-left: 28px;
    display: flex;
    flex-direction: column;
    white-space: nowrap;
}

.account small {
    font-size: 23px;
    line-height: 28px;
    margin-top: -8px;
    color: #3a3a3a;
}

.account span {
    margin-top: 2px;
    font-size: 41px;
    line-height: 52px;
    letter-spacing: 0.35px;
    color: #161616;
}

.account.first { width: 366px; }

.account.second {
    width: 340px;
    padding-left: 26px;
}

.search {
    width: 1010px;
    height: 88px;
    background: #e1e3e7;
    border-radius: 10px;
    display: flex;
    align-items: center;
    padding-left: 44px;
}

.search span {
    margin: 0 0 4px 35px;
    font-size: 32px;
    color: #4c4e51;
}

.header-icons {
    margin-left: 320px;
    display: flex;
    align-items: center;
}

.help {
    width: 39px;
    height: 39px;
    margin-left: 53px;
    border-radius: 50%;
    background: #4a4a4a;
    color: #fff;
    font-size: 33px;
    line-height: 40px;
    text-align: center;
}

.kebab { margin: 0 50px 0 56px; }

/* サイドバー */
.body {
    flex: 1;
    min-height: 0;
    display: flex;
}

.sidebar {
    width: 541px;
    flex: none;
    display: flex;
    flex-direction: column;
    padding-top: 17px;
}

.item {
    width: 422px;
    height: 85px;
    flex: none;
    display: flex;
    align-items: center;
    padding-left: 36px;
    border-radius: 0 42px 42px 0;
    font-size: 28px;
    line-height: 40px;
}

.item svg {
    width: 38px;
}

.item span {
    margin: 0 0 1px 34px;
}

.item.active {
    height: 84px;
    background: #d9e6f6;
    color: #1b3d80;
}

.item.report {
    position: relative;
    height: 83px;
    margin: 2px 0 1px;
    background: #dde7f8;
}

.item.report span {
    margin-left: 35px;
    letter-spacing: -0.5px;
}

/* 選択中の項目を囲む赤枠 */
.item.report::after {
    content: "";
    position: absolute;
    left: 2px;
    top: -2px;
    width: 259px;
    height: 88px;
    border: 6px solid #ab1216;
    border-radius: 3px;
    box-shadow: 0 0 2px #f4a9ab, inset 0 0 3px #f4a9ab;
}

.spacer {
    flex: 1;
}

.item.low {
    height: 82px;
}

.collapse {
    width: 422px;
    height: 83px;
    margin-left: 9px;
    border-top: 2px solid #ccd0d3;
    padding: 30px 36px 0 0;
    display: flex;
    justify-content: flex-end;
}

/* メイン */
.main {
    width: 2172px;
    flex: none;
}

.page-head {
    height: 189px;
    display: flex;
    align-items: flex-start;
}

h1 {
    margin: 31px 0 0 -1px;
    width: 609px;
    font-size: 45.4px;
    line-height: 64px;
    font-weight: 400;
    letter-spacing: -0.2px;
    white-space: nowrap;
}

.chip {
    width: 110px;
    height: 55px;
    border: 2px solid #d3d5d7;
    border-radius: 28px;
    display: flex;
    align-items: center;
    padding-left: 18px;
    gap: 21px;
}

.chip.wide {
    width: 156px;
    height: 51px;
    margin-top: 38px;
    padding-left: 19px;
    gap: 0;
}

.chip.wide span {
    margin: 0 15px 2px 8px;
    font-size: 23px;
    color: #444;
}

.date {
    margin: 35px 16px 0 auto;
    display: flex;
    align-items: center;
    gap: 15px;
    font-size: 29px;
    line-height: 44px;
    letter-spacing: -0.4px;
}

.row {
    display: grid;
    gap: 28px;
}

.row.top {
    grid-template-columns: 1332px 812px;
    grid-auto-rows: 597px;
}

.row.bottom {
    grid-template-columns: 703px 704px 711px;
    grid-auto-rows: 560px;
    gap: 27px;
    margin-top: 28px;
}

.card {
    background: #fefefe;
    border: 2px solid #d4d7d9;
    border-radius: 17px;
    padding: 45px 43px 0 45px;
}

.row.bottom .card {
    padding-top: 40px;
}

.card.traffic {
    padding-left: 44px;
    padding-right: 45px;
}

.card-head {
    display: flex;
    justify-content: space-between;
    height: 41px;
}

.row.bottom .card-head {
    height: 62px;
}

h2 {
    margin: 0;
    font-size: 29.5px;
    line-height: 34px;
    font-weight: 400;
    white-space: nowrap;
}

.row.bottom h2 {
    margin-top: 3px;
}

.dash {
    display: inline-block;
    padding-bottom: 7px;
    background: repeating-linear-gradient(90deg, #444 0 6px, transparent 6px 10px) 0 100% / 100% 2px no-repeat;
}

.rest {
    margin-left: 10px;
    font-size: 30px;
}

.users .dash {
    letter-spacing: 1px;
}

.traffic .rest {
    margin-left: 6px;
}

.total {
    height: 60px;
    margin: 7px 0 0 -2px;
    font-size: 56px;
    line-height: 60px;
    letter-spacing: -1.7px;
}

.up {
    margin-left: 38px;
    font-size: 32.5px;
    line-height: 1;
    font-weight: 500;
    letter-spacing: 0;
    color: #1f6b34;
}

.plot {
    margin: 18px 0 0 -2px;
    overflow: visible;
}

.traffic .plot {
    margin-left: -1px;
}

.plot text {
    font-size: 24px;
    fill: #1f1f1f;
}

.plot .end { text-anchor: end; }
.plot .mid { text-anchor: middle; }

.grid {
    stroke: #e2e3e5;
    stroke-width: 2;
    fill: none;
}

.line {
    stroke: #164a8e;
    stroke-width: 3.6;
    stroke-linejoin: round;
    fill: none;
}

.bars rect {
    fill: #1d6bd8;
    stroke: #1a5cb8;
    stroke-width: 1;
}

.more {
    margin-top: 30px;
    display: flex;
    align-items: center;
    gap: 12px;
    font-size: 24.4px;
    line-height: 34px;
}

.more.blue {
    justify-content: flex-end;
    margin-right: -18px;
    gap: 19px;
    color: #1a4785;
}

/* 地図 */
.map {
    margin: 31px 0 0 16px;
}

.map path {
    vector-effect: non-scaling-stroke;
    stroke: #eef3fa;
    stroke-width: 1;
    stroke-linejoin: round;
}

.none path { fill: #c6c6c7; }
.some path { fill: #6696dc; }
.few path { fill: #8fafdf; }
.most path { fill: #145bc6; }

.map .borders {
    fill: none;
    stroke: #f0f0f0;
}

.map .ticks {
    fill: none;
    stroke: #a9b6c8;
    stroke-width: 1.5;
}

/* 上位のページ */
.thead,
.tr {
    display: flex;
    align-items: center;
    height: 60.75px;
    border-bottom: 2px solid #dcdee0;
    font-size: 26.5px;
}

.pages .chip {
    margin-right: 2px;
}

.thead {
    height: 62px;
}

.thead .views {
    margin-left: auto;
    display: flex;
    align-items: center;
    gap: 20px;
}

.tr {
    position: relative;
}

.tr.shade {
    background: #f4f7f9;
}

.fill {
    position: absolute;
    left: 0;
    top: 0;
    bottom: -1px;
    border-bottom: 5px solid #174a92;
}

.tr:not(.shade) .fill {
    background: #f5f8fa;
}

.tr span {
    position: relative;
    white-space: nowrap;
}

.n { width: 57px; }

.p { letter-spacing: 0.25px; }

.v { margin-left: auto; }

/* 維持率 */
.card.retention {
    padding-right: 45px;
}

.cohort {
    display: grid;
    grid-template-columns: 142px repeat(5, 92px);
    grid-template-rows: 55px;
    grid-auto-rows: 53px;
    gap: 3.8px 3.2px;
    align-items: center;
    font-size: 26px;
    margin-right: -10px;
}

.cohort b {
    font-weight: 400;
    padding-top: 5px;
    letter-spacing: -0.4px;
}

.cohort i {
    height: 53px;
}

.cohort span {
    margin-left: -1px;
    padding-bottom: 4px;
    white-space: nowrap;
}

.c1 { background: #133e86; }
.c2 { background: #174a98; }
.c3 { background: #1a54ad; }
.c4 { background: #2060c0; }
.c45 { background: #2267cc; }
.c5 { background: #1d6dd8; }
.c6 { background: #407fda; }
.c65 { background: #5a8fe2; }
.c7 { background: #6797de; }
.c8 { background: #7eb0ea; }

/* スクロールバー */
.scrollbar {
    width: 19px;
    margin-left: auto;
    background: #f0f3f5;
}

.thumb {
    height: 362px;
    background: #c1c4c7;
    border-left: 2px solid #adb1b4;
}
```
